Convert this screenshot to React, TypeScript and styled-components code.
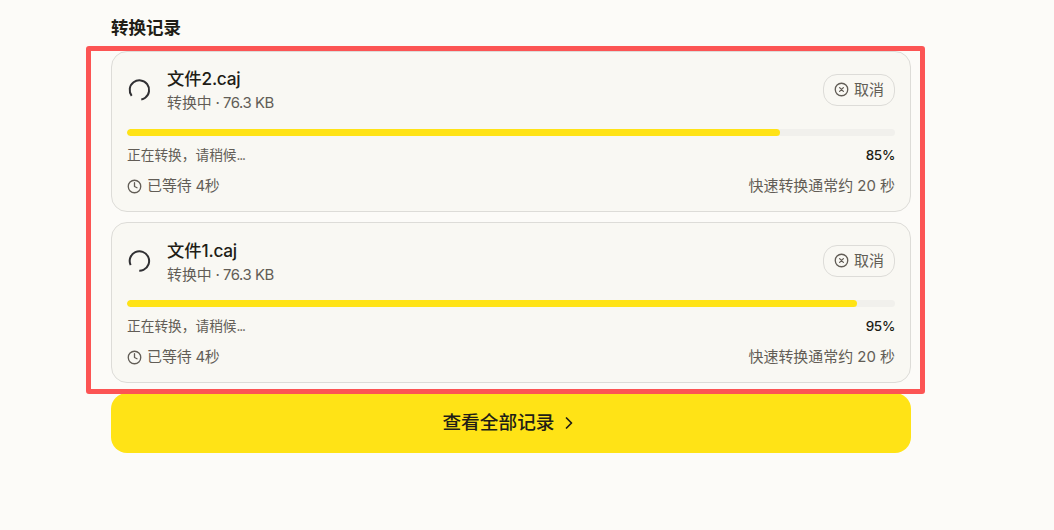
import { ReactNode } from 'react'
import styled, { createGlobalStyle } from 'styled-components'

interface Task {
  name: string
  ext: string
  size: string
  progress: number
  waited: number
  spin: number
}

const TASKS: Task[] = [
  { name: '文件', ext: '2.caj', size: '76.3 KB', progress: 85, waited: 4, spin: 0 },
  { name: '文件', ext: '1.caj', size: '76.3 KB', progress: 95, waited: 4, spin: 12 },
]

export default function App() {
  return (
    <>
      <GlobalStyle />
      <Page>
        <Heading>转换记录</Heading>
        <Records>
          {TASKS.map((task) => (
            <TaskCard key={task.ext} {...task} />
          ))}
          <Highlight />
        </Records>
        <ViewAll>
          <ViewAllLabel>查看全部记录</ViewAllLabel>
          <ChevronIcon />
        </ViewAll>
      </Page>
    </>
  )
}

function TaskCard({ name, ext, size, progress, waited, spin }: Task) {
  return (
    <Card>
      <CardHeader>
        <SpinnerIcon angle={spin} />
        <FileInfo>
          <FileName>
            {name}
            <Latin $tracking={-0.3}>{ext}</Latin>
          </FileName>
          <FileMeta>
            转换中<Latin $tracking={-0.45}> · {size}</Latin>
          </FileMeta>
        </FileInfo>
        <CancelButton>
          <CancelIcon />
          <CancelLabel>取消</CancelLabel>
        </CancelButton>
      </CardHeader>
      <Track>
        <Bar style={{ width: `${progress}%` }} />
      </Track>
      <StatusRow>
        <span>
          正在转换，请稍候<Latin $tracking={-1.2}>...</Latin>
        </span>
        <Percent>{progress}%</Percent>
      </StatusRow>
      <TimeRow>
        <Waited>
          <ClockIcon />
          <span>
            已等待<Latin $tracking={-0.5}> {waited}</Latin>秒
          </span>
        </Waited>
        <span>快速转换通常约 20 秒</span>
      </TimeRow>
    </Card>
  )
}

interface IconProps {
  size: number
  strokeWidth?: number
  children: ReactNode
}

function Icon({ size, strokeWidth = 2, children }: IconProps) {
  return (
    <IconSvg
      width={size}
      height={size}
      viewBox="0 0 24 24"
      fill="none"
      stroke="currentColor"
      strokeWidth={strokeWidth}
      strokeLinecap="round"
      strokeLinejoin="round"
    >
      {children}
    </IconSvg>
  )
}

function SpinnerIcon({ angle }: { angle: number }) {
  return (
    <SpinnerSvg width={24} height={24} viewBox="0 0 24 24">
      <circle
        cx="12.4"
        cy="12"
        r="9.7"
        pathLength="360"
        strokeDasharray="296 64"
        transform={`rotate(${143 + angle} 12.4 12)`}
      />
    </SpinnerSvg>
  )
}

function CancelIcon() {
  return (
    <Icon size={15} strokeWidth={2.1}>
      <circle cx="12" cy="12" r="10" />
      <path d="m15 9-6 6M9 9l6 6" />
    </Icon>
  )
}

function ClockIcon() {
  return (
    <Icon size={15} strokeWidth={2.1}>
      <circle cx="12" cy="12" r="10" />
      <path d="M12 6v6l4 2" />
    </Icon>
  )
}

function ChevronIcon() {
  return (
    <Icon size={20} strokeWidth={2.1}>
      <path d="m9 18 6-6-6-6" />
    </Icon>
  )
}

const GlobalStyle = createGlobalStyle`
  * {
    box-sizing: border-box;
  }

  body {
    margin: 0;
    background: #fcfbf8;
    color: #211d16;
    font-family: Inter, 'Noto Sans CJK SC', sans-serif;
  }
`

const Page = styled.main`
  width: 800px;
  margin-left: 111px;
  padding-top: 14px;
`

const Heading = styled.h2`
  height: 27px;
  margin: 0 0 9.6px;
  font-size: 17.5px;
  line-height: 27px;
  font-weight: 700;
`

const Records = styled.section`
  position: relative;
  display: flex;
  flex-flow: column;
  gap: 10.2px;
`

// Red marker frame laid over the list.
const Highlight = styled.div`
  position: absolute;
  top: -4.6px;
  left: -25px;
  right: -14px;
  bottom: -11px;
  border: 5px solid #fc5454;
  border-radius: 3px;
  pointer-events: none;
`

const Card = styled.article`
  height: 161.2px;
  padding: 15px;
  border: 1px solid #dddcd8;
  border-radius: 16px;
  background: #f9f8f3;
`

const CardHeader = styled.header`
  display: flex;
  align-items: center;
  height: 46px;
`

const FileInfo = styled.div`
  flex: 1;
  margin-left: 16px;
  padding-top: 2.6px;
`

const FileName = styled.div`
  font-size: 17.3px;
  line-height: 25px;
  font-weight: 500;
`

const FileMeta = styled.div`
  color: #625d56;
  font-size: 14.9px;
  line-height: 24px;
`

const Latin = styled.span<{ $tracking: number }>`
  letter-spacing: ${({ $tracking }) => $tracking}px;
`

const CancelButton = styled.button`
  display: flex;
  align-items: center;
  gap: 5px;
  height: 32px;
  padding: 0 10px;
  border: 1px solid #dddcd8;
  border-radius: 14px;
  background: transparent;
  color: #625d56;
  font: inherit;
  font-size: 15px;
`

const CancelLabel = styled.span`
  padding-bottom: 3px;
`

const Track = styled.div`
  height: 7.5px;
  margin-top: 16px;
  border-radius: 4px;
  background: #f1f0ec;
  overflow: hidden;
`

const Bar = styled.div`
  height: 100%;
  border-radius: 4px;
  background: #ffe316;
`

const StatusRow = styled.div`
  display: flex;
  align-items: center;
  justify-content: space-between;
  height: 22px;
  margin-top: 8px;
  color: #625d56;
  font-size: 13.7px;
  line-height: 22px;
`

const Percent = styled.span`
  color: #211d16;
  font-size: 13.5px;
  font-weight: 500;
  letter-spacing: -0.3px;
`

const TimeRow = styled.div`
  display: flex;
  align-items: center;
  justify-content: space-between;
  height: 24px;
  margin-top: 8px;
  color: #625d56;
  font-size: 14.95px;
  line-height: 24px;
`

const Waited = styled.div`
  display: flex;
  align-items: center;
  gap: 5px;
`

const ViewAll = styled.button`
  display: flex;
  align-items: center;
  justify-content: center;
  gap: 4px;
  width: 100%;
  height: 60px;
  margin-top: 10px;
  padding: 0 1px 0 0;
  border: 0;
  border-radius: 16px;
  background: #ffe316;
  color: #211d16;
  font: inherit;
  font-size: 18.7px;
  font-weight: 500;
`

const ViewAllLabel = styled.span`
  padding-bottom: 6px;
`

const IconSvg = styled.svg`
  flex: none;
`

const SpinnerSvg = styled.svg`
  flex: none;
  fill: none;
  stroke: #303033;
  stroke-width: 2px;
`
